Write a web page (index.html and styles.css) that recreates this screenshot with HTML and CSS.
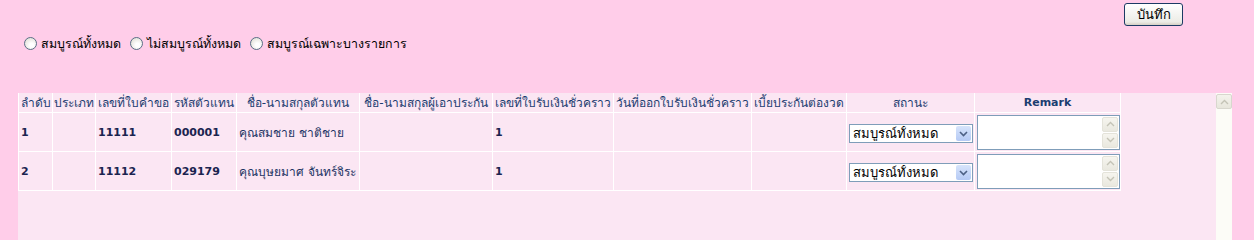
FILE: index.html
```html
<!DOCTYPE html>
<html lang="th">
<head>
<meta charset="utf-8">
<title>บันทึกสถานะ</title>
<link rel="stylesheet" href="styles.css">
</head>
<body>
<div class="page">
<div class="topbar">
  <button class="btn" type="button">บันทึก</button>
</div>
<div class="radios">
  <label class="opt"><input type="radio" name="all"><span>สมบูรณ์ทั้งหมด</span></label>
  <label class="opt"><input type="radio" name="all"><span>ไม่สมบูรณ์ทั้งหมด</span></label>
  <label class="opt"><input type="radio" name="all"><span>สมบูรณ์เฉพาะบางรายการ</span></label>
</div>
<div class="panel">
  <div class="scrollarea">
    <table class="grid">
      <colgroup>
        <col class="c1"><col class="c2"><col class="c3"><col class="c4"><col class="c5"><col class="c6"><col class="c7"><col class="c8"><col class="c9"><col class="c10"><col class="c11">
      </colgroup>
      <thead>
        <tr>
          <th>ลำดับ</th><th>ประเภท</th><th>เลขที่ใบคำขอ</th><th>รหัสตัวแทน</th><th>ชื่อ-นามสกุลตัวแทน</th><th>ชื่อ-นามสกุลผู้เอาประกัน</th><th>เลขที่ใบรับเงินชั่วคราว</th><th>วันที่ออกใบรับเงินชั่วคราว</th><th>เบี้ยประกันต่องวด</th><th>สถานะ</th><th class="bold">Remark</th>
        </tr>
      </thead>
      <tbody>
        <tr>
          <td class="b">1</td><td></td><td class="b">11111</td><td class="b">000001</td><td class="th">คุณสมชาย ชาติชาย</td><td></td><td class="b">1</td><td></td><td></td>
          <td><div class="sel"><select><option>สมบูรณ์ทั้งหมด</option><option>ไม่สมบูรณ์</option></select><span class="selbtn"><svg width="9" height="6" viewBox="0 0 9 6"><path d="M1 1l3.5 3.5L8 1" fill="none" stroke="#4d6185" stroke-width="1.6"/></svg></span></div></td>
          <td><div class="memo"><textarea></textarea><div class="vbar"><span class="arr"><svg width="9" height="6" viewBox="0 0 9 6"><path d="M1 5l3.5-3.5L8 5" fill="none" stroke="#c4c3b6" stroke-width="1.4"/></svg></span><span class="arr"><svg width="9" height="6" viewBox="0 0 9 6"><path d="M1 1l3.5 3.5L8 1" fill="none" stroke="#c4c3b6" stroke-width="1.4"/></svg></span></div></div></td>
        </tr>
        <tr>
          <td class="b">2</td><td></td><td class="b">11112</td><td class="b">029179</td><td class="th">คุณบุษยมาศ จันทร์จิระ</td><td></td><td class="b">1</td><td></td><td></td>
          <td><div class="sel"><select><option>สมบูรณ์ทั้งหมด</option><option>ไม่สมบูรณ์</option></select><span class="selbtn"><svg width="9" height="6" viewBox="0 0 9 6"><path d="M1 1l3.5 3.5L8 1" fill="none" stroke="#4d6185" stroke-width="1.6"/></svg></span></div></td>
          <td><div class="memo"><textarea></textarea><div class="vbar"><span class="arr"><svg width="9" height="6" viewBox="0 0 9 6"><path d="M1 5l3.5-3.5L8 5" fill="none" stroke="#c4c3b6" stroke-width="1.4"/></svg></span><span class="arr"><svg width="9" height="6" viewBox="0 0 9 6"><path d="M1 1l3.5 3.5L8 1" fill="none" stroke="#c4c3b6" stroke-width="1.4"/></svg></span></div></div></td>
        </tr>
      </tbody>
    </table>
  </div>
  <div class="pagebar">
    <span class="pgup"><svg width="9" height="6" viewBox="0 0 9 6"><path d="M1 5l3.5-3.5L8 5" fill="none" stroke="#c4c3b6" stroke-width="1.4"/></svg></span>
  </div>
</div>
</div>
</body>
</html>
```
FILE: styles.css
```css
html, body {
  margin: 0;
  padding: 0;
  height: 100%;
  overflow: hidden;
  background: #ffcde9;
  font-family: "DejaVu Sans", sans-serif;
  font-size: 11px;
  color: #000;
}

.page {
  display: flex;
  flex-direction: column;
  height: 100%;
}

.topbar {
  display: flex;
  justify-content: flex-end;
  padding: 3px 71px 0 0;
  height: 24px;
}

.btn {
  width: 59px;
  height: 23px;
  padding: 0;
  border: 1px solid #1c3a64;
  border-radius: 3px;
  background: linear-gradient(#ffffff, #ececE6 85%, #d6d0c4);
  font: inherit;
  font-size: 13px;
  color: #000;
}

.radios {
  display: flex;
  align-items: center;
  gap: 9px;
  padding: 7px 0 0 24px;
  height: 18px;
  font-size: 12.4px;
}

.opt {
  display: flex;
  align-items: center;
  gap: 4px;
  color: #000;
}

.opt input {
  appearance: none;
  -webkit-appearance: none;
  margin: 0;
  width: 13px;
  height: 13px;
  border-radius: 50%;
  border: 1px solid #5a6f86;
  background: radial-gradient(circle at 60% 65%, #ffffff 20%, #dedcd2 90%);
  box-sizing: border-box;
}

.panel {
  display: flex;
  flex: 1;
  margin: 41px 22px 0 18px;
}

.scrollarea {
  flex: 1;
  background: #fbe6f3;
}

.pagebar {
  width: 16px;
  background: #fcfcf7;
  padding-top: 1px;
}

.pgup {
  display: flex;
  align-items: center;
  justify-content: center;
  height: 15px;
  border: 1px solid #d8d7ce;
  border-radius: 2px;
  background: linear-gradient(#f4f3ec, #e7e6dc);
  box-sizing: border-box;
}

.grid {
  table-layout: fixed;
  border-collapse: collapse;
  width: 1102px;
  border-right: 1px solid #a9a3a8;
  border-bottom: 1px solid #a9a3a8;
}

.c1 { width: 34px; }
.c2 { width: 43px; }
.c3 { width: 76px; }
.c4 { width: 65px; }
.c5 { width: 123px; }
.c6 { width: 133px; }
.c7 { width: 121px; }
.c8 { width: 138px; }
.c9 { width: 95px; }
.c10 { width: 128px; }
.c11 { width: 146px; }

.grid th {
  height: 17px;
  padding: 0;
  font-weight: normal;
  font-size: 12px;
  color: #1b3d70;
  text-align: center;
  white-space: nowrap;
  overflow: hidden;
  border: 1px solid #ffffff;
  border-top: none;
}

.grid th.bold {
  font-weight: bold;
  font-size: 11px;
}

.grid td {
  height: 38px;
  padding: 0 0 0 2px;
  border: 1px solid #ffffff;
  white-space: nowrap;
  overflow: hidden;
  color: #1d3564;
}

.grid td.b {
  font-weight: bold;
  font-size: 11px;
  color: #1b2450;
}

.grid td.th {
  font-size: 12px;
}

.sel {
  position: relative;
  width: 124px;
  height: 19px;
  margin-top: 3px;
}

.sel select {
  appearance: none;
  -webkit-appearance: none;
  width: 100%;
  height: 100%;
  margin: 0;
  padding: 0 0 0 3px;
  border: 1px solid #7f9db9;
  background: #fff;
  font: inherit;
  font-size: 13px;
  color: #000;
  border-radius: 0;
}

.selbtn {
  position: absolute;
  right: 2px;
  top: 2px;
  width: 15px;
  height: 15px;
  display: flex;
  align-items: center;
  justify-content: center;
  background: linear-gradient(#d7e4fb, #b5caf5);
  border-radius: 2px;
}

.memo {
  display: flex;
  width: 143px;
  height: 35px;
  border: 1px solid #7f9db9;
  background: #fff;
  box-sizing: border-box;
}

.memo textarea {
  flex: 1;
  border: none;
  resize: none;
  margin: 0;
  padding: 0;
  outline: none;
  background: transparent;
  overflow: hidden;
}

.vbar {
  width: 16px;
  display: flex;
  flex-direction: column;
  gap: 1px;
  padding: 1px 1px 1px 0;
}

.arr {
  flex: 1;
  display: flex;
  align-items: center;
  justify-content: center;
  border: 1px solid #e4e3da;
  border-radius: 2px;
  background: linear-gradient(#f6f5ef, #e9e8df);
}
```
